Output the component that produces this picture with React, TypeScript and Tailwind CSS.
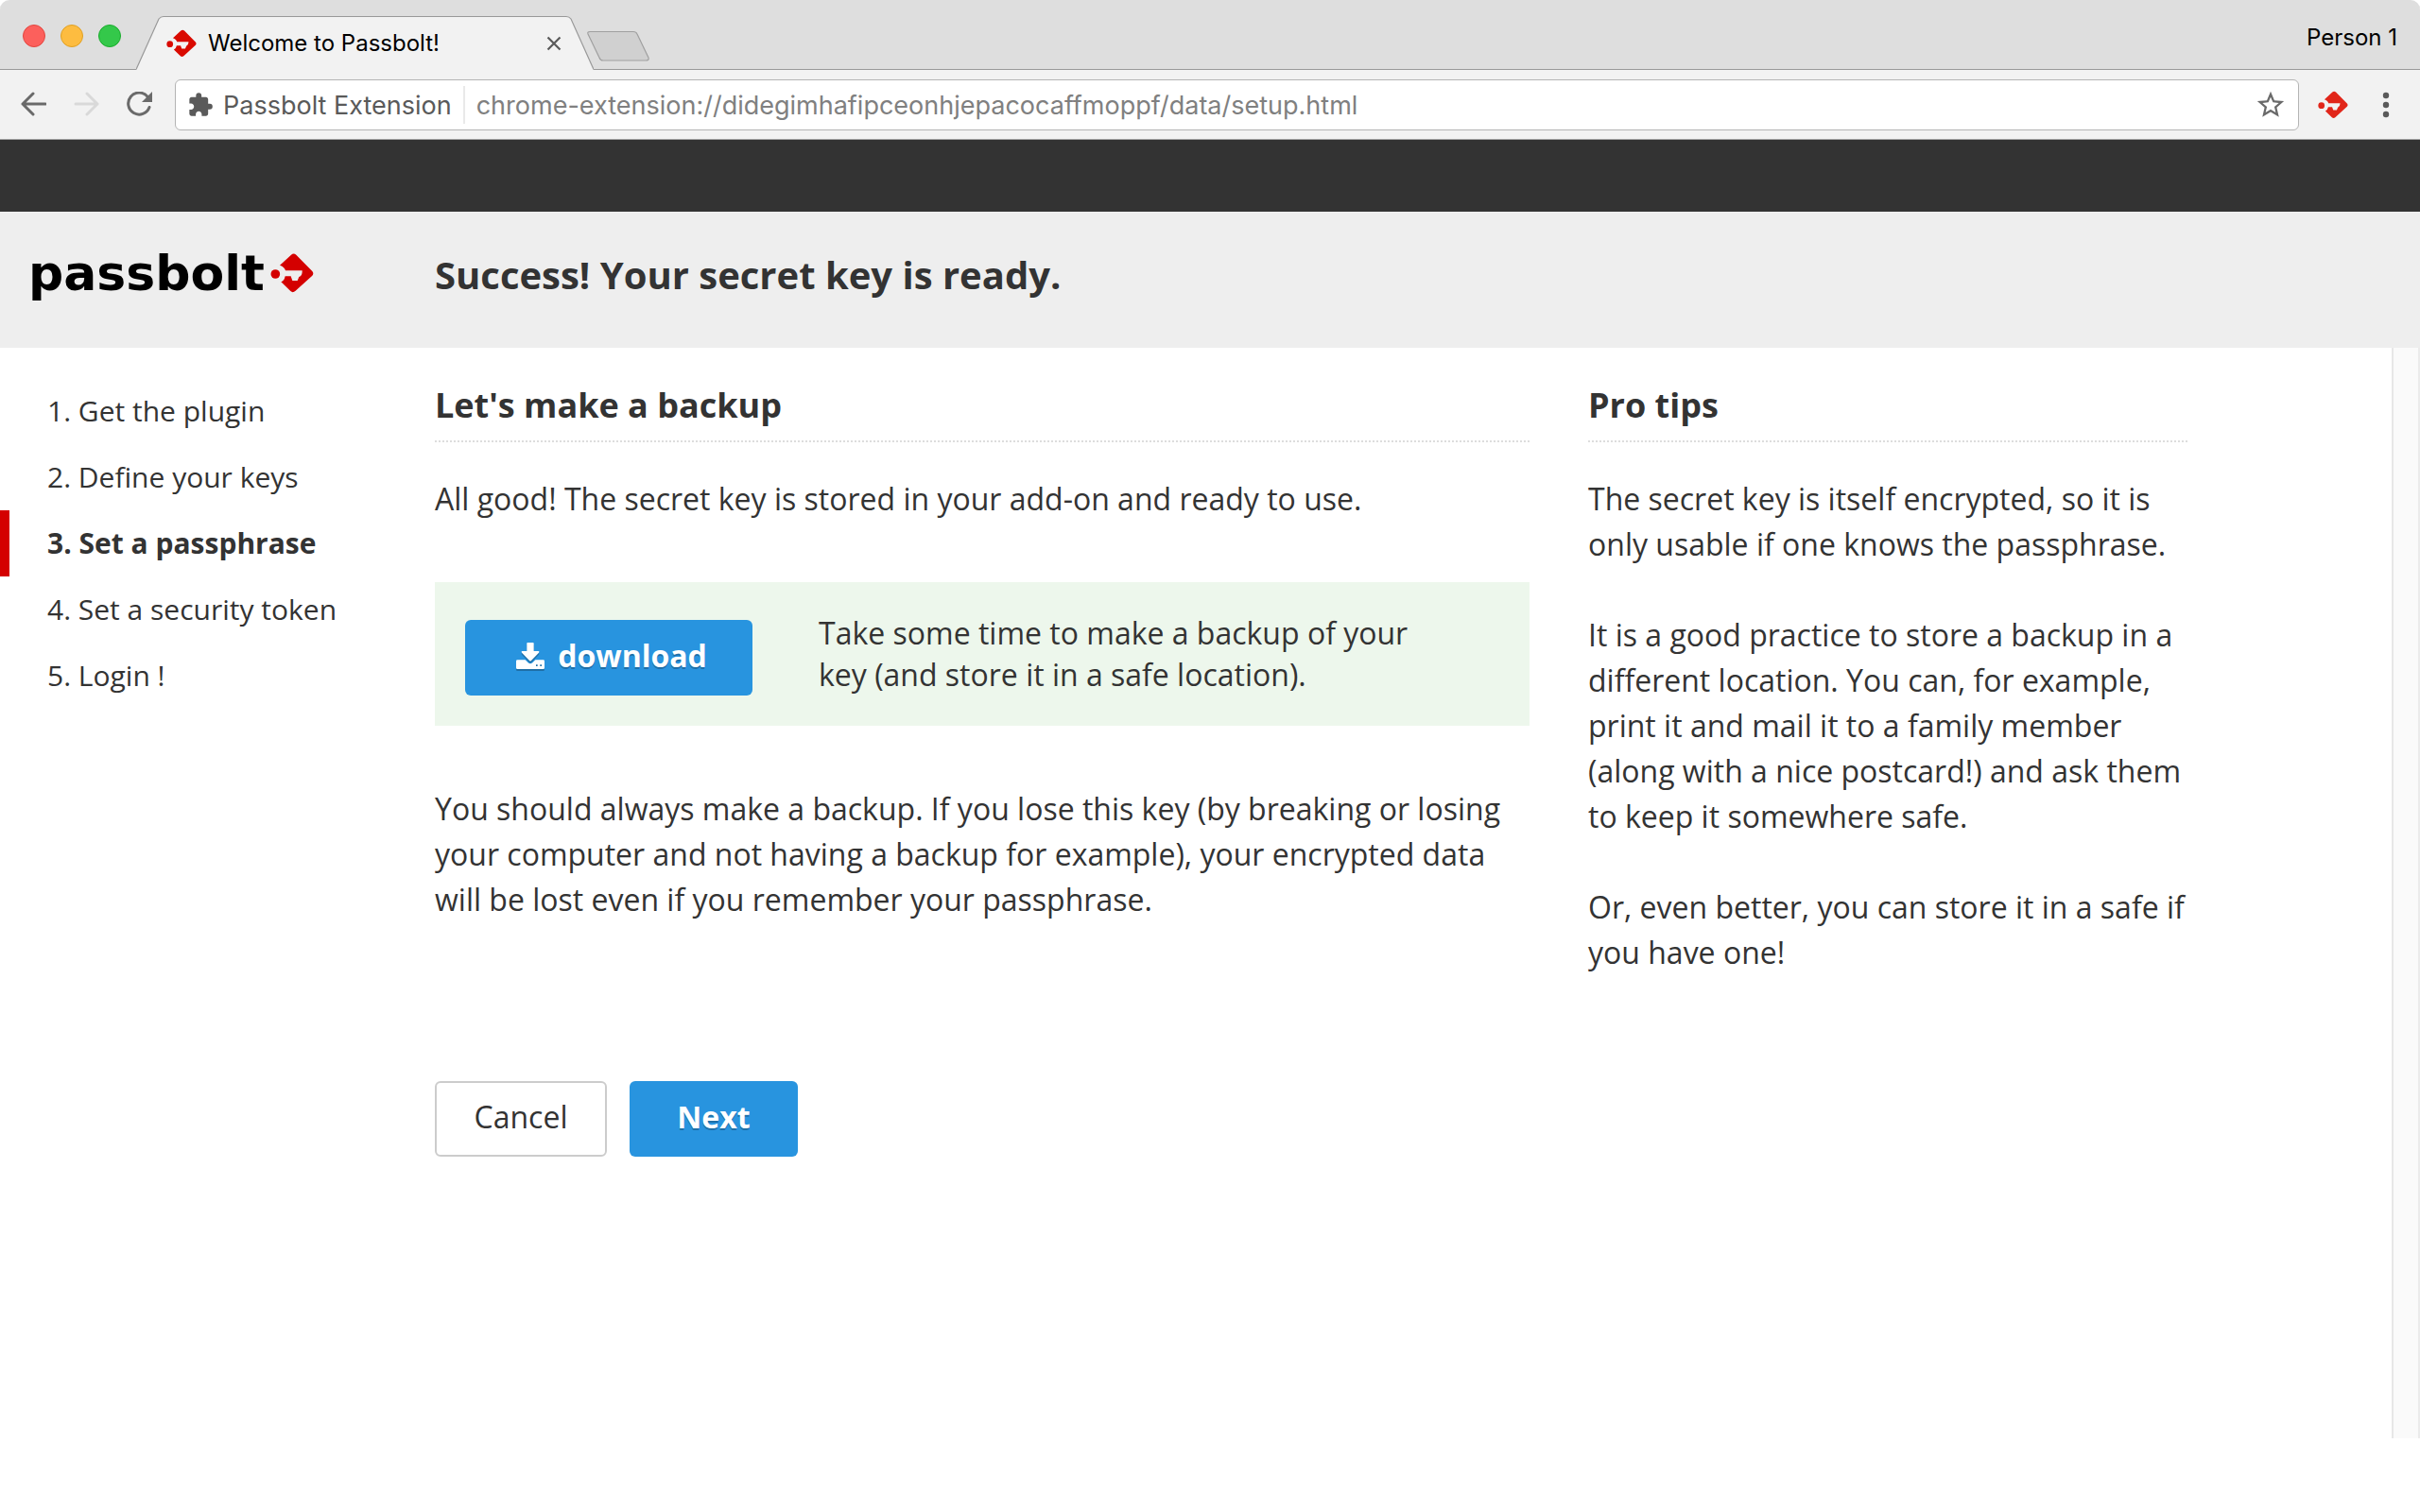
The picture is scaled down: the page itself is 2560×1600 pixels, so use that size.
import React from "react";
import { MdExtension, MdStarBorder } from "react-icons/md";

function Mark({ className }: { className: string }) {
  return (
    <svg viewBox="856 144 138 126" className={className} aria-hidden="true">
      <circle cx="872" cy="210" r="14.5" />
      <path d="M886 182L922 149Q930 142 938 149L989 201Q995 208 989 215L935 264Q927 271 920 264L890 235Q900 232 903 217H921L926 231H942L947 219Q958 214 957 199H904Q902 188 886 182Z" />
    </svg>
  );
}

function DownloadIcon() {
  return (
    <svg viewBox="0 0 90 84" className="h-7 w-[30px] drop-shadow-[0_2px_0_rgba(0,0,0,0.25)]" fill="currentColor" aria-hidden="true">
      <path d="M36 0H54Q56 0 56 3V27H71Q75 28 72 32L48 57Q45 60 42 57L18 32Q15 28 19 27H34V3Q34 0 36 0Z" />
      <path
        fillRule="evenodd"
        d="M4 55H29L38 64Q45 70 52 64L61 55H86Q90 55 90 59V80Q90 84 86 84H4Q0 84 0 80V59Q0 55 4 55ZM63 70V75H68V70ZM76 70V75H81V70Z"
      />
    </svg>
  );
}

function TabStrip() {
  return (
    <div className="flex h-[74px] items-stretch rounded-t-[10px] bg-[#dedede] shadow-[inset_0_-1px_0_#999]">
      <div className="flex items-center gap-4 pl-6 pb-0.5 pt-1">
        <button aria-label="Close window" className="size-6 rounded-full border border-[#e2463f] bg-[#fc605c]" />
        <button aria-label="Minimise window" className="size-6 rounded-full border border-[#dfa023] bg-[#fdbc40]" />
        <button aria-label="Zoom window" className="size-6 rounded-full border border-[#1aac2c] bg-[#34c84a]" />
      </div>
      <div className="relative ml-4 flex w-[484px] pt-[18px]">
        <svg viewBox="0 0 484 58" preserveAspectRatio="none" className="absolute bottom-0 left-0 h-[58px] w-full" aria-hidden="true">
          <path d="M0 57.500L24 4Q26 1.500 29 1.500H455Q458 1.500 460 4L484 57.500V58H0Z" fill="#f2f2f2" />
          <path d="M0 57.500L24 4Q26 1.500 29 1.500H455Q458 1.500 460 4L484 57.500" fill="none" stroke="#999" strokeWidth="1.200" />
        </svg>
        <div className="relative flex flex-1 items-center pl-8 pr-8">
          <Mark className="h-[30px] w-8 fill-[#d90a00]" />
          <span className="ml-3 flex-1 text-2xl text-black">Welcome to Passbolt!</span>
          <button aria-label="Close tab" className="p-0.5">
            <svg viewBox="0 0 16 16" className="size-4" aria-hidden="true">
              <path d="M1.500 1.500L14.500 14.500M14.500 1.500L1.500 14.500" stroke="#5a5a5a" strokeWidth="2.200" />
            </svg>
          </button>
        </div>
      </div>
      <button aria-label="New tab" className="-ml-2 flex items-end pb-2">
        <svg viewBox="0 0 68 34" className="h-[34px] w-[68px]" aria-hidden="true">
          <path d="M4 1.500H50Q53 1.500 54 4L66 29Q67 32 63 32H18Q15 32 14 29L2 4Q1 1.500 4 1.500Z" fill="#d0d0d0" stroke="#a0a0a0" strokeWidth="1.200" />
        </svg>
      </button>
      <span className="ml-auto self-center pr-6 pt-1.5 text-2xl text-black">Person 1</span>
    </div>
  );
}

function Toolbar() {
  return (
    <div className="flex h-[74px] items-center border-b border-[#a0a0a0] bg-[#f2f2f2] pl-[21px] pr-8">
      <button aria-label="Back">
        <svg viewBox="0 0 28 28" className="size-7" fill="none" stroke="#6a6a6a" strokeWidth="3" strokeLinecap="round" strokeLinejoin="round" aria-hidden="true">
          <path d="M27 13H3M14 2L3 13L14 24" />
        </svg>
      </button>
      <button aria-label="Forward" className="ml-7">
        <svg viewBox="0 0 28 28" className="size-7" fill="none" stroke="#d9d9d9" strokeWidth="3" strokeLinecap="round" strokeLinejoin="round" aria-hidden="true">
          <path d="M3 13H26M15 2L26 13L15 24" />
        </svg>
      </button>
      <button aria-label="Reload" className="ml-7">
        <svg viewBox="0 0 28 28" className="size-7" fill="none" aria-hidden="true">
          <path d="M23 5.200A11.500 11.500 0 1 0 25 16.500" stroke="#6a6a6a" strokeWidth="3" strokeLinecap="round" />
          <path d="M28 0V11H17Z" fill="#6a6a6a" />
        </svg>
      </button>
      <div className="ml-6 flex h-[54px] flex-1 items-center rounded-md border border-[#b4b4b4] bg-white pl-3 pr-3">
        <MdExtension className="size-7 text-[#5a5a5a]" aria-hidden="true" />
        <span className="ml-2.5 border-r-2 border-[#e9e9e9] pt-1 pb-0.5 pr-3 text-[27px] leading-[34px] text-[#5a5a5a]">Passbolt Extension</span>
        <input
          aria-label="Address"
          readOnly
          value="chrome-extension://didegimhafipceonhjepacocaffmoppf/data/setup.html"
          className="ml-3 min-w-0 flex-1 bg-transparent pt-0.5 text-[27px] leading-[34px] text-[#808080] outline-none"
        />
        <button aria-label="Bookmark this page">
          <MdStarBorder className="size-[34px] text-[#6a6a6a]" aria-hidden="true" />
        </button>
      </div>
      <button aria-label="Passbolt" className="ml-5">
        <Mark className="h-[30px] w-8 fill-[#e1261a]" />
      </button>
      <button aria-label="Menu" className="ml-9">
        <svg viewBox="0 0 8 28" className="h-7 w-2" fill="#5a5a5a" aria-hidden="true">
          <circle cx="4" cy="4" r="3.200" />
          <circle cx="4" cy="14" r="3.200" />
          <circle cx="4" cy="24" r="3.200" />
        </svg>
      </button>
    </div>
  );
}

const steps = ["1. Get the plugin", "2. Define your keys", "3. Set a passphrase", "4. Set a security token", "5. Login !"];

export default function App() {
  return (
    <div className="flex min-h-screen flex-col bg-white font-['Open_Sans',sans-serif] text-[32px] leading-[48px] text-[#333]">
      <div className="font-['Inter','Liberation_Sans',sans-serif]">
        <TabStrip />
        <Toolbar />
      </div>
      <div className="h-[76px] bg-[#333]" />
      <header className="flex h-36 bg-[#eee]">
        <a href="#home" className="flex w-[460px] shrink-0 items-start pl-[30px] pt-9">
          <span className="font-['DejaVu_Sans',sans-serif] text-[52px] leading-[58px] font-bold text-black">passbolt</span>
          <Mark className="ml-1.5 mt-2 h-[42px] w-[46px] fill-[#d40000]" />
        </a>
        <h1 className="pt-10 text-[40px] leading-[54px] font-bold">Success! Your secret key is ready.</h1>
      </header>
      <div className="mb-[78px] flex flex-1">
        <div className="grid flex-1 grid-cols-[460px_1158fr_62px_634fr_216fr] content-start">
          <nav className="pt-8">
            <ol>
              {steps.map((step, i) => (
                <li key={step}>
                  <a
                    href={`#step-${i + 1}`}
                    aria-current={i === 2 ? "step" : undefined}
                    className={
                      i === 2
                        ? "block border-l-[10px] border-[#d40000] pl-10 text-[30px] leading-[70px] font-bold"
                        : "block pl-[50px] text-[30px] leading-[70px]"
                    }
                  >
                    {step}
                  </a>
                </li>
              ))}
            </ol>
          </nav>
          <main className="pt-9">
            <h2 className="border-b-2 border-dotted border-[#ddd] pb-3 text-4xl leading-[50px] font-bold">Let's make a backup</h2>
            <p className="mt-9">All good! The secret key is stored in your add-on and ready to use.</p>
            <section className="mt-16 flex items-start bg-[#edf7ec] px-8 py-8">
              <button className="mt-2 flex h-20 w-[304px] items-center justify-center gap-3.5 rounded-md bg-[#2894df] pb-1 pl-1.5 font-bold text-white text-shadow-[0_2px_0_rgba(0,0,0,0.25)]">
                <DownloadIcon />
                download
              </button>
              <p className="ml-[70px] max-w-[660px] leading-[44px]">Take some time to make a backup of your key (and store it in a safe location).</p>
            </section>
            <p className="mt-16">
              You should always make a backup. If you lose this key (by breaking or losing your computer and not having a backup for example), your
              encrypted data will be lost even if you remember your passphrase.
            </p>
            <div className="mt-[168px] flex gap-6">
              <button className="h-20 w-[182px] rounded-md border-2 border-[#ccc] bg-white pb-1">Cancel</button>
              <button className="h-20 w-[178px] rounded-md bg-[#2894df] pb-1 font-bold text-white text-shadow-[0_2px_0_rgba(0,0,0,0.25)]">Next</button>
            </div>
          </main>
          <aside className="col-start-4 pt-9">
            <h2 className="border-b-2 border-dotted border-[#ddd] pb-3 text-4xl leading-[50px] font-bold">Pro tips</h2>
            <div className="mt-9 flex flex-col gap-12">
              <p>The secret key is itself encrypted, so it is only usable if one knows the passphrase.</p>
              <p>
                It is a good practice to store a backup in a different location. You can, for example, print it and mail it to a family member (along
                with a nice postcard!) and ask them to keep it somewhere safe.
              </p>
              <p>Or, even better, you can store it in a safe if you have one!</p>
            </div>
          </aside>
        </div>
        <div className="w-[30px] border-l-2 border-r-2 border-l-[#e7e7e7] border-r-[#ebebeb] bg-[#fafafa]" />
      </div>
    </div>
  );
}
